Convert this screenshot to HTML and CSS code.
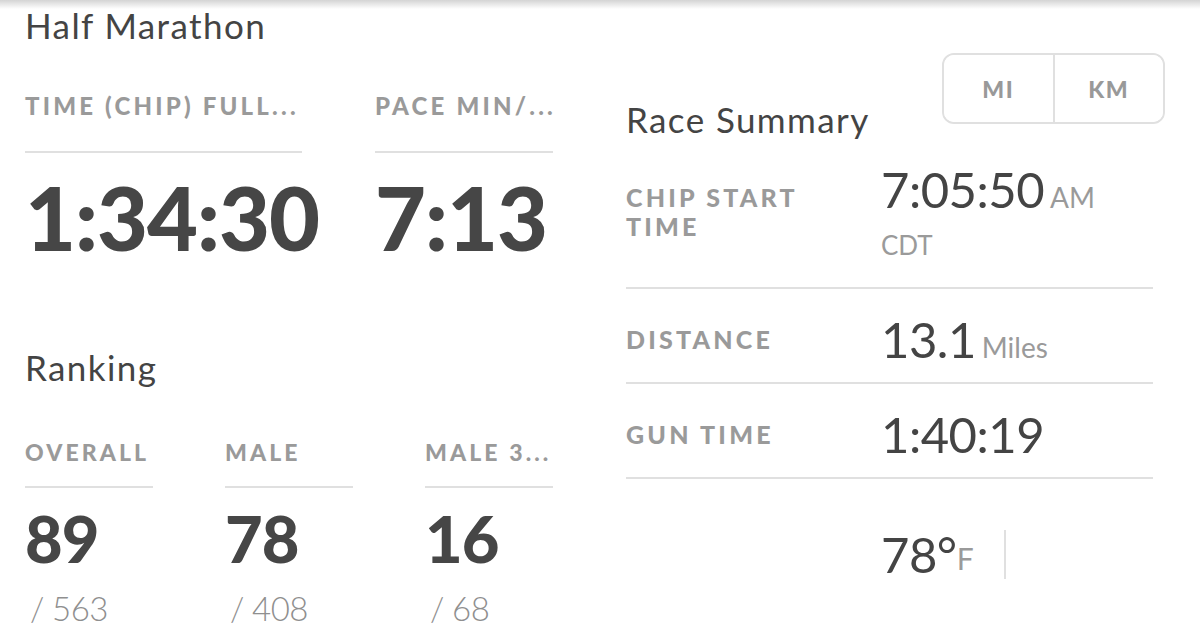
FILE: index.html
```html
<!DOCTYPE html>
<html lang="en">
<head>
    <meta charset="UTF-8">
    <meta name="viewport" content="width=device-width, initial-scale=1.0">
    <title>Half Marathon - Results</title>
    <link rel="stylesheet" href="styles.css">
</head>
<body>
    <main class="page">
        <section class="results">
            <h2 class="section-title">Half Marathon</h2>
            <div class="stat-row">
                <div class="stat stat-time">
                    <div class="stat-label">TIME (CHIP) FULL...</div>
                    <div class="stat-value">1:34:30</div>
                </div>
                <div class="stat stat-pace">
                    <div class="stat-label">PACE MIN/...</div>
                    <div class="stat-value">7:13</div>
                </div>
            </div>

            <h2 class="section-title ranking-title">Ranking</h2>
            <div class="rank-row">
                <div class="rank">
                    <div class="rank-label">OVERALL</div>
                    <div class="rank-value">89</div>
                    <div class="rank-total">/ 563</div>
                </div>
                <div class="rank">
                    <div class="rank-label">MALE</div>
                    <div class="rank-value">78</div>
                    <div class="rank-total">/ 408</div>
                </div>
                <div class="rank">
                    <div class="rank-label">MALE 3...</div>
                    <div class="rank-value">16</div>
                    <div class="rank-total">/ 68</div>
                </div>
            </div>
        </section>

        <section class="summary">
            <div class="summary-head">
                <h2 class="section-title summary-title">Race Summary</h2>
                <div class="unit-toggle">
                    <button class="unit-btn">MI</button>
                    <button class="unit-btn">KM</button>
                </div>
            </div>

            <div class="summary-list">
                <div class="summary-row">
                    <div class="summary-label">CHIP START<br>TIME</div>
                    <div class="summary-value">
                        <span class="big">7:05:50</span><span class="unit">AM</span>
                        <div class="tz">CDT</div>
                    </div>
                </div>
                <div class="summary-row">
                    <div class="summary-label">DISTANCE</div>
                    <div class="summary-value">
                        <span class="big">13.1</span><span class="unit">Miles</span>
                    </div>
                </div>
                <div class="summary-row">
                    <div class="summary-label">GUN TIME</div>
                    <div class="summary-value">
                        <span class="big">1:40:19</span>
                    </div>
                </div>
                <div class="summary-row weather-row">
                    <div class="summary-label"></div>
                    <div class="summary-value weather">
                        <span class="big">78&deg;</span><span class="unit">F</span>
                        <span class="weather-sep"></span>
                    </div>
                </div>
            </div>
        </section>
    </main>
</body>
</html>
```

FILE: styles.css
```css
html {
    background: #fff;
}

body {
    margin: 0;
    font-family: Lato, "Open Sans", sans-serif;
    color: #454545;
    background: #fff linear-gradient(#d4d4d4, #fff 9px) no-repeat;
}

.page {
    display: grid;
    grid-template-columns: 1fr 539px;
    column-gap: 26px;
    padding: 5px 35px 0 25px;
}

.section-title {
    margin: 0;
    font-size: 35px;
    line-height: 40px;
    font-weight: 400;
    letter-spacing: 1.4px;
    color: #444;
}

/* left column: times */

.stat-row {
    display: flex;
    gap: 73px;
    margin-top: 47px;
}

.stat-time {
    width: 277px;
}

.stat-pace {
    width: 178px;
}

.stat-label,
.rank-label,
.summary-label {
    font-weight: 900;
    color: #9a9a9a;
    letter-spacing: 3.2px;
}

.stat-label {
    font-size: 24px;
    line-height: 28px;
    padding-bottom: 31px;
    border-bottom: 2px solid #e0e0e0;
    white-space: nowrap;
}

.stat-value {
    margin-top: 20px;
    font-size: 88px;
    line-height: 88px;
    font-weight: 900;
    letter-spacing: -1px;
    color: #464646;
}

.ranking-title {
    margin-top: 86px;
}

.rank-row {
    display: flex;
    gap: 72px;
    margin-top: 51px;
}

.rank {
    width: 128px;
}

.rank-label {
    font-size: 23px;
    line-height: 28px;
    padding-bottom: 20px;
    border-bottom: 2px solid #e0e0e0;
    white-space: nowrap;
    letter-spacing: 3.1px;
}

.rank-value {
    margin-top: 18px;
    font-size: 65px;
    line-height: 65px;
    font-weight: 900;
    letter-spacing: -1px;
    color: #464646;
}

.rank-total {
    margin-top: 17px;
    padding-left: 5px;
    font-size: 33px;
    line-height: 40px;
    font-weight: 300;
    letter-spacing: -0.6px;
    color: #8f8f8f;
}

/* right column: race summary */

.summary-head {
    display: flex;
    justify-content: space-between;
    align-items: flex-start;
}

.summary-title {
    margin-top: 94px;
}

.unit-toggle {
    display: flex;
    width: 223px;
    height: 71px;
    margin-top: 48px;
    border: 2px solid #e0e0e0;
    border-radius: 12px;
    box-sizing: border-box;
    overflow: hidden;
}

.unit-btn {
    flex: 1;
    padding: 0;
    border: none;
    background: #fff;
    font-family: inherit;
    font-size: 23px;
    font-weight: 900;
    color: #999;
    letter-spacing: 1.5px;
    cursor: pointer;
}

.unit-btn + .unit-btn {
    border-left: 2px solid #e0e0e0;
}

.summary-list {
    margin-right: 12px;
}

.summary-row {
    display: grid;
    grid-template-columns: 255px 1fr;
    align-items: center;
    padding: 22px 0 15px;
    border-bottom: 2px solid #e0e0e0;
}

.summary-row:first-child {
    padding: 22px 0 24px;
}

.summary-label {
    font-size: 25px;
    line-height: 29px;
    letter-spacing: 3.2px;
}

.summary-value .big {
    font-size: 49px;
    line-height: 56px;
    color: #444;
    letter-spacing: -0.5px;
}

.summary-value .unit {
    margin-left: 6px;
    font-size: 28px;
    color: #9a9a9a;
}

.tz {
    margin-top: 10px;
    font-size: 26px;
    line-height: 36px;
    color: #9a9a9a;
}

.weather-row {
    border-bottom: none;
    padding-top: 47px;
}

.weather {
    display: flex;
    align-items: center;
}

.weather .unit {
    align-self: flex-end;
    margin-left: 0;
    padding-bottom: 6px;
    font-size: 30px;
}

.weather-sep {
    width: 2px;
    height: 49px;
    margin-left: 30px;
    background: #e0e0e0;
}
```
